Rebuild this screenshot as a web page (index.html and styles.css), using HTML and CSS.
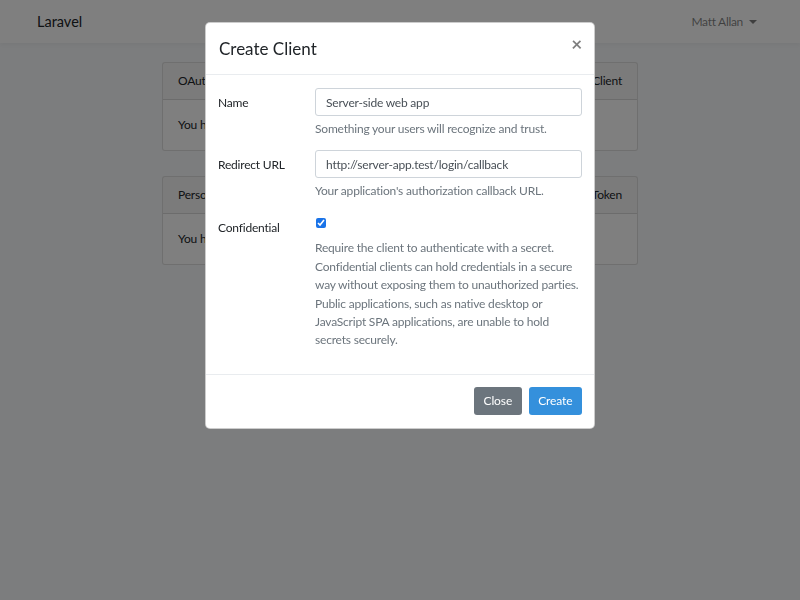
FILE: index.html
```html
<!DOCTYPE html>
<html lang="en">
<head>
<meta charset="utf-8">
<title>Laravel</title>
<link rel="stylesheet" href="styles.css">
</head>
<body>
<nav class="navbar">
  <div class="container nav-inner">
    <span class="brand">Laravel</span>
    <span class="user">Matt Allan <span class="caret"></span></span>
  </div>
</nav>
<main class="main">
  <div class="card">
    <div class="card-header"><span>OAuth Clients</span><span class="link">Create New Client</span></div>
    <div class="card-body">You have not created any OAuth clients.</div>
  </div>
  <div class="card">
    <div class="card-header"><span>Personal Access Tokens</span><span class="link">Create New Token</span></div>
    <div class="card-body">You have not created any personal access tokens.</div>
  </div>
</main>
<div class="backdrop"></div>
<div class="modal">
  <div class="modal-header">
    <h4 class="modal-title">Create Client</h4>
    <span class="close">&times;</span>
  </div>
  <div class="modal-body">
    <div class="form-row">
      <label class="col-label">Name</label>
      <div class="field">
        <input class="form-control" type="text" value="Server-side web app">
        <div class="help">Something your users will recognize and trust.</div>
      </div>
    </div>
    <div class="form-row">
      <label class="col-label">Redirect URL</label>
      <div class="field">
        <input class="form-control" type="text" value="http://server-app.test/login/callback">
        <div class="help">Your application's authorization callback URL.</div>
      </div>
    </div>
    <div class="form-row last">
      <label class="col-label conf">Confidential</label>
      <div class="field">
        <input class="check" type="checkbox" checked>
        <p class="help para">Require the client to authenticate with a secret. Confidential clients can hold credentials in a secure way without exposing them to unauthorized parties. Public applications, such as native desktop or JavaScript SPA applications, are unable to hold secrets securely.</p>
      </div>
    </div>
  </div>
  <div class="modal-footer">
    <button class="btn btn-secondary">Close</button>
    <button class="btn btn-primary">Create</button>
  </div>
</div>
</body>
</html>
```

FILE: styles.css
```css
* { box-sizing: border-box; }
html, body { margin: 0; padding: 0; }
body {
  width: 800px;
  height: 600px;
  overflow: hidden;
  background: #f8fafc;
  font-family: "Lato", "Noto Sans", sans-serif;
  font-size: 12px;
  letter-spacing: -0.2px;
  line-height: 1.6;
  color: #212529;
}
.container { width: 750px; margin: 0 auto; padding: 0 12px; }
.navbar {
  height: 43px;
  background: #fff;
  box-shadow: 0 2px 4px rgba(0,0,0,.04);
}
.nav-inner { display: flex; align-items: center; justify-content: space-between; height: 43px; }
.brand { font-size: 14.5px; color: #212529; letter-spacing: 0; }
.user { color: rgba(0,0,0,.5); padding-right: 6px; display: flex; align-items: center; letter-spacing: -0.3px; }
.caret {
  display: inline-block; width: 0; height: 0; margin-left: 6px;
  border-top: 4px solid rgba(0,0,0,.5);
  border-left: 4px solid transparent; border-right: 4px solid transparent;
}
.main { padding-top: 19px; display: flex; flex-direction: column; align-items: center; gap: 25px; }
.card { width: 476px; background: #fff; border: 1px solid rgba(0,0,0,.125); border-radius: 3px; }
.card-header {
  height: 37px; padding: 0 15px; display: flex; align-items: center; justify-content: space-between;
  background: rgba(0,0,0,.03); border-bottom: 1px solid rgba(0,0,0,.125);
}
.card-body { padding: 15px; height: 50px; }
.backdrop { position: fixed; inset: 0; background: rgba(0,0,0,.5); }
.modal {
  position: absolute; left: 205px; top: 22px; width: 390px;
  background: #fff; border: 1px solid rgba(0,0,0,.2); border-radius: 5px;
}
.modal-header {
  height: 52px; padding: 0 13px; display: flex; align-items: center; justify-content: space-between;
  border-bottom: 1px solid #e9ecef;
}
.modal-title { margin: 0; font-size: 17px; font-weight: 400; line-height: 1.2; padding-top: 1px; letter-spacing: 0; }
.close { font-size: 19px; font-weight: 700; color: #000; opacity: .5; line-height: 1; margin-top: -11px; margin-right: -1px; }
.modal-body { padding: 13px 12px 11px 12px; }
.form-row { display: grid; grid-template-columns: 97px 267px; margin-bottom: 12px; }
.form-row.last { margin-bottom: 0; }
.col-label { padding-top: 5px; line-height: 1.6; }
.col-label.conf { padding-top: 6px; }
.form-control {
  display: block; width: 100%; height: 28px; padding: 0 10px;
  font: inherit; letter-spacing: -0.2px; color: #495057; background: #fff;
  border: 1px solid #ced4da; border-radius: 3px; outline: none;
}
.help { color: #6c757d; margin-top: 3px; }
.check { margin: 6px 0 0 1px; width: 10px; height: 10px; accent-color: #1a73e8; display: block; }
.para { margin: 11px 0 13px 0; line-height: 18.4px; }
.modal-footer {
  border-top: 1px solid #e9ecef; padding: 12px 12px 13px; display: flex; justify-content: flex-end; gap: 7px;
}
.btn {
  height: 28px; padding: 0 8.5px; font: inherit; letter-spacing: -0.1px; color: #fff; border: 1px solid transparent; border-radius: 3px;
}
.btn-secondary { background: #6c757d; }
.btn-primary { background: #3490dc; }
```
